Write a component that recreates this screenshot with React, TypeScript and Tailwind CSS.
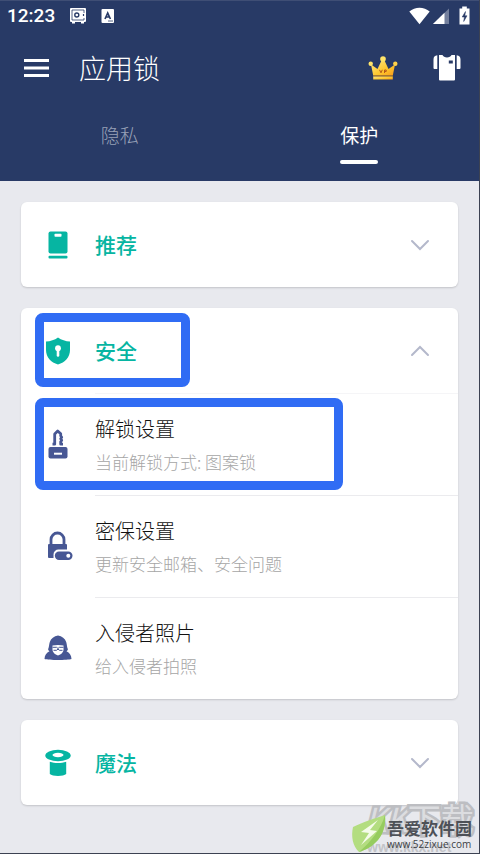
import * as React from 'react';

const cjk = "font-['Noto_Sans_CJK_SC',sans-serif]";

export default function App() {
  return (
    <div
      className={`relative flex flex-col min-h-screen overflow-hidden bg-[#e8e9ee] border-r border-b border-[#3c4252] ${cjk}`}
    >
      <header className="bg-[#283a66] text-white border-t border-[#3f4e75]">
        <StatusBar />
        <Toolbar />
        <Tabs />
      </header>

      <main className="flex flex-col gap-[21px] px-[21px] pt-[21px] pb-12">
        <Card title="推荐" icon={<PhoneIcon />} />
        <Card title="安全" icon={<ShieldIcon />} open highlighted>
          {items.map((item) => (
            <Item key={item.title} {...item} />
          ))}
        </Card>
        <Card title="魔法" icon={<HatIcon />} />
      </main>

      <Watermark />
    </div>
  );
}

function StatusBar() {
  return (
    <div className="flex items-center h-[29px] pl-[7px] pr-[9px] font-['Roboto',sans-serif]">
      <span className="text-[19px] leading-5 font-medium">12:23</span>
      <svg className="ml-[14px]" width="18" height="18" viewBox="0 0 18 18">
        <path d="M2 1h14a1 1 0 0 1 1 1v12a1 1 0 0 1-1 1h-1v1.500h-3V15H6v1.500H3V15H2a1 1 0 0 1-1-1V2a1 1 0 0 1 1-1z" fill="#fff" />
        <path d="M15 6V3H3v10h12v-2" fill="none" stroke="#283a66" strokeWidth="0.800" />
        <circle cx="7.800" cy="8" r="2" fill="none" stroke="#283a66" strokeWidth="1.400" />
        <path d="M14.500 7v2" stroke="#283a66" strokeWidth="1.200" />
      </svg>
      <svg className="ml-[14px]" width="14" height="16" viewBox="0 0 14 16">
        <rect x="0.500" y="1" width="12.500" height="14" rx="1" fill="#fff" />
        <path d="M4 11 6.700 5 9.400 11M5 9h3.500" fill="none" stroke="#283a66" strokeWidth="1.700" />
        <path d="M7 13h5" stroke="#283a66" strokeWidth="0.800" />
      </svg>
      <svg className="ml-auto" width="21" height="18" viewBox="0 0 21 18">
        <path d="M0.300 4.500C6-0.600 15-0.600 20.700 4.500L10.500 17.200z" fill="#fff" />
      </svg>
      <svg className="ml-[3px]" width="16" height="18" viewBox="0 0 16 18">
        <path d="M16 1.500V17H0z" fill="#737f9d" />
        <path d="M11.500 5.800V17H0z" fill="#fff" />
      </svg>
      <svg className="ml-[10px]" width="11" height="19" viewBox="0 0 11 19">
        <path d="M3.200 0.500h4.600v2h2.700v16H0.500v-16h2.700z" fill="#fff" />
        <path d="M6.500 5.500 3.200 11h2.200L4.700 15.500 8 9.800H5.800z" fill="#283a66" stroke="#283a66" strokeWidth="0.500" />
      </svg>
    </div>
  );
}

function Toolbar() {
  return (
    <div className="flex items-center h-[76px] pl-6 pr-[18px]">
      <button type="button" aria-label="菜单">
        <svg width="25" height="20" viewBox="0 0 25 20">
          <path d="M0 2.500h25M0 10h25M0 17.500h25" stroke="#fff" strokeWidth="2.800" />
        </svg>
      </button>
      <h1 className="ml-[30px] text-[27px] leading-9 font-light">应用锁</h1>
      <button type="button" aria-label="VIP" className="ml-auto">
        <svg width="30" height="26" viewBox="0 0 30 26">
          <defs>
            <linearGradient id="gold" x1="0" y1="0" x2="1" y2="1">
              <stop offset="0" stopColor="#ffe985" />
              <stop offset="0.600" stopColor="#ffc62c" />
              <stop offset="1" stopColor="#f79a1c" />
            </linearGradient>
          </defs>
          <path d="M3 9.500 9.500 14 13.500 5.500h3L20.500 14 27 9.500 24.800 20.500H5.200z" fill="url(#gold)" />
          <path d="M5.200 21.300h19.600v3.200H5.200z" fill="url(#gold)" />
          <path d="M5.200 20.900h19.600" stroke="#b9771b" strokeWidth="0.900" />
          <circle cx="15" cy="4" r="2.800" fill="#ffe36a" />
          <circle cx="2.700" cy="8.800" r="2.200" fill="#ffe36a" />
          <circle cx="27.300" cy="8.800" r="2.200" fill="#ffd24a" />
          <path d="m11.500 14.800 1.500 3 1.300-3M16.500 18v-3h1.700v1.500h-1.500" fill="none" stroke="#b5581a" strokeWidth="1" />
        </svg>
      </button>
      <button type="button" aria-label="主题" className="ml-[35px]">
        <svg width="28" height="28" viewBox="0 0 28 28">
          <path d="M6 1h3.500c1 3.200 8 3.200 9 0H22v24.500a1 1 0 0 1-1 1H7a1 1 0 0 1-1-1z" fill="#fff" />
          <path d="M4.300 1.200V15H1.500a1 1 0 0 1-1-1V5.500c0-2.500 1.200-4 3.800-4.300zM23.700 1.200V15h2.800a1 1 0 0 0 1-1V5.500c0-2.500-1.200-4-3.800-4.300z" fill="#fff" />
          <rect x="15.800" y="6.500" width="4" height="3" fill="#283a66" />
        </svg>
      </button>
    </div>
  );
}

function Tabs() {
  return (
    <div role="tablist" className="grid grid-cols-2 text-[19px] leading-6">
      <button type="button" role="tab" aria-selected="false" className="flex flex-col items-center pt-[17px] pb-[34px] text-[#98a1b7] font-light">
        隐私
      </button>
      <button type="button" role="tab" aria-selected="true" className="flex flex-col items-center pt-[17px] pb-[17px]">
        保护
        <span className="mt-[13px] w-[38px] h-1 rounded-full bg-white" />
      </button>
    </div>
  );
}

type CardProps = {
  title: string;
  icon: React.ReactNode;
  open?: boolean;
  highlighted?: boolean;
  children?: React.ReactNode;
};

function Card({ title, icon, open = false, highlighted, children }: CardProps) {
  return (
    <section className="bg-white rounded-md shadow-[0_1px_2px_rgba(0,0,0,0.16)]">
      <button type="button" aria-expanded={open} className="relative flex items-center w-full h-[85px] text-left">
        <span className="flex justify-center w-[74px]">{icon}</span>
        <span className="flex-1 pb-0.5 text-[21px] leading-7 font-medium text-[#06b5a2]">{title}</span>
        <span className="flex justify-center w-[76px]">
          <svg width="20" height="12" viewBox="0 0 20 12">
            <path
              d={open ? 'M2 10 10 2l8 8' : 'm2 2 8 8 8-8'}
              fill="none"
              stroke="#b4b8cb"
              strokeWidth="2"
              strokeLinecap="round"
            />
          </svg>
        </span>
        {highlighted ? (
          <span className="absolute left-[14px] top-[5px] w-[155px] h-[74px] border-[9px] border-[#306cf4] rounded-lg" />
        ) : null}
      </button>
      {children ? <ul>{children}</ul> : null}
    </section>
  );
}

type ItemProps = {
  title: string;
  description: string;
  icon: React.ReactNode;
  highlighted?: boolean;
};

function Item({ title, description, icon, highlighted }: ItemProps) {
  return (
    <li className="relative group">
      <button type="button" className="flex items-center w-full text-left">
        <span className="flex justify-center w-[74px]">{icon}</span>
        <span className="flex flex-col flex-1 gap-[7px] pt-[21px] pb-[21px] border-t border-[#ebebee] group-first:border-[#f5f5f7]">
          <span className="text-[20px] leading-7 font-light text-[#111]">{title}</span>
          <span className="text-[17px] leading-6 font-light text-[#a6a6a6]">{description}</span>
        </span>
      </button>
      {highlighted ? (
        <span className="absolute left-[14px] top-[5px] w-[308px] h-[92px] border-[9px] border-[#306cf4] rounded-lg pointer-events-none" />
      ) : null}
    </li>
  );
}

function PhoneIcon() {
  return (
    <svg width="20" height="28" viewBox="0 0 20 28" fill="#06b5a2">
      <rect x="0.500" y="0.500" width="19" height="22" rx="2" />
      <rect x="0.500" y="24.700" width="19" height="2.800" rx="1" />
      <rect x="6.500" y="2.800" width="7" height="3" rx="0.800" fill="#fff" />
    </svg>
  );
}

function ShieldIcon() {
  return (
    <svg width="26" height="28" viewBox="0 0 26 28">
      <path d="M13 0.500c3.500 2.500 7.500 3.800 12 4V13c0 7-5 12.500-12 14.500C6 25.500 1 20 1 13V4.500c4.500-0.200 8.500-1.500 12-4z" fill="#06b5a2" />
      <circle cx="13" cy="11.200" r="2.900" fill="#fff" />
      <path d="M13 12v6.500" stroke="#fff" strokeWidth="2.600" strokeLinecap="round" />
    </svg>
  );
}

function HatIcon() {
  return (
    <svg width="26" height="28" viewBox="0 0 26 28" fill="#06b5a2">
      <ellipse cx="13" cy="6.500" rx="12.700" ry="5.800" />
      <ellipse cx="13" cy="6" rx="5.500" ry="2.200" fill="#fff" />
      <path d="M4.800 12.800c5 1.700 11.400 1.700 16.400 0V25c-2.500 2.600-13.900 2.600-16.400 0z" />
    </svg>
  );
}

function KeyIcon() {
  return (
    <svg width="20" height="30" viewBox="0 0 20 30">
      <path
        d="M4.500 15.200h2.200V5L9.700 2l3 2.800v2l1 1.400-1 1.500 1 1.500-1 1.500v2.500H15"
        fill="none"
        stroke="#475794"
        strokeWidth="2.800"
        strokeLinejoin="round"
      />
      <rect x="0.500" y="18" width="19" height="11.500" rx="2" fill="#475794" />
      <rect x="6" y="23.700" width="8" height="2" fill="#fff" />
    </svg>
  );
}

function PadlockIcon() {
  return (
    <svg className="ml-1" width="26" height="30" viewBox="0 0 26 30">
      <path d="M4 14V8.500a6.500 6.500 0 0 1 13 0V14" fill="none" stroke="#475794" strokeWidth="2.800" />
      <path d="M2 13h17a1 1 0 0 1 1 1v4.500h-8.500a5 5 0 0 0-5 5V27H2a1 1 0 0 1-1-1V14a1 1 0 0 1 1-1z" fill="#475794" />
      <rect x="7.800" y="20.500" width="17.700" height="8.500" rx="4.200" fill="#475794" />
      <circle cx="21.300" cy="24.700" r="2" fill="#fff" />
    </svg>
  );
}

function IntruderIcon() {
  return (
    <svg width="28" height="26" viewBox="0 0 28 26">
      <path
        d="M14 0.500c4 0.800 7 3 8.200 6.500 0.800 2.500 0.600 4.500 1.600 7 0.300 1-0.500 1.800-1.300 2.200 3 1.300 4.800 3.800 5 7.800-4 1.300-23 1.300-27 0 0.200-4 2-6.500 5-7.800-0.800-0.400-1.600-1.200-1.300-2.200 1-2.500 0.800-4.500 1.600-7C7 3.500 10 1.300 14 0.500z"
        fill="#475794"
      />
      <path d="M8.500 10.500c3.500-0.700 7.500-0.700 11 0v4c0 2.800-2.500 5-5.500 6-3-1-5.500-3.200-5.500-6z" fill="#fff" />
      <path d="M8.500 12.300h4l1.500 1.200 1.500-1.200h4M9.500 15.300h3l1.500-1.200 1.500 1.200h3" fill="none" stroke="#475794" strokeWidth="1" />
    </svg>
  );
}

function Watermark() {
  return (
    <div className="absolute right-0 bottom-0 w-[130px] h-[52px] pointer-events-none">
      <span className="absolute left-[16px] -top-px text-[33px] leading-9 whitespace-nowrap text-[#dcdde0] [-webkit-text-stroke:5px_#bdbec2] [paint-order:stroke]">
        <i>KK</i>下载
      </span>
      <span className="absolute left-[18px] bottom-0 font-['Liberation_Sans',sans-serif] text-[14px] leading-3 font-bold text-[#c3c4c8]">
        www.kkx.net
      </span>
      <svg className="absolute left-[2px] top-[13px]" width="36" height="39" viewBox="0 0 36 39">
        <path d="M34 1C25 4 12 8 2 13c-2 9-0.500 19 6 25C22 34 36 22 34 1z" fill="#b3dd80" />
        <path d="M34 1c-4 14-14 27-26 37C22 34 36 22 34 1z" fill="#96cc5f" />
        <path d="m27 6-17 12 8 1-8 12 16-14-7-1z" fill="#f4fbe9" />
      </svg>
      <span className="absolute left-[38px] top-[15px] text-[17px] leading-6 font-bold whitespace-nowrap text-[#4d5157]">
        吾爱软件园
      </span>
      <span className="absolute left-[38px] top-[37px] font-['Open_Sans',sans-serif] text-[10px] leading-3 text-[#3c3f45]">
        www.52zixue.com
      </span>
    </div>
  );
}

const items: ItemProps[] = [
  { icon: <KeyIcon />, title: '解锁设置', description: '当前解锁方式: 图案锁', highlighted: true },
  { icon: <PadlockIcon />, title: '密保设置', description: '更新安全邮箱、安全问题' },
  { icon: <IntruderIcon />, title: '入侵者照片', description: '给入侵者拍照' },
];
